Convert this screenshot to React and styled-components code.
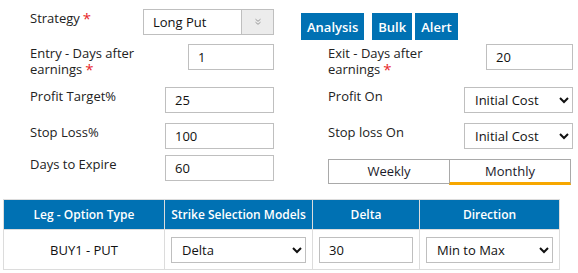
import styled, { createGlobalStyle } from 'styled-components';

const GlobalStyle = createGlobalStyle`
  body {
    margin: 0;
    font-family: "Open Sans", "Liberation Sans", sans-serif;
    font-size: 13px;
    color: #222;
    background: #fff;
  }
`;

function App() {
  return (
    <Page>
      <GlobalStyle />
      <Form>
        <Field>
          <Label>Strategy<Required>*</Required></Label>
          <StrategyBox>
            <StrategySelect defaultValue="Long Put">
              <option>Long Put</option>
              <option>Long Call</option>
            </StrategySelect>
            <ArrowBox>
              <svg width="8" height="8" viewBox="0 0 8 8" fill="none" stroke="#999" strokeWidth="1">
                <polyline points="1.5,1.2 4,3.3 6.5,1.2" />
                <polyline points="1.5,4.2 4,6.3 6.5,4.2" />
              </svg>
            </ArrowBox>
          </StrategyBox>
        </Field>
        <ButtonBar>
          <ActionButton $spaced>Analysis</ActionButton>
          <ActionButton>Bulk</ActionButton>
          <ActionButton>Alert</ActionButton>
        </ButtonBar>

        <Field>
          <Label>Entry - Days after earnings<Required>*</Required></Label>
          <TextInput $width={86} defaultValue="1" />
        </Field>
        <Field>
          <Label>Exit - Days after earnings<Required>*</Required></Label>
          <TextInput $width={87} defaultValue="20" />
        </Field>

        <Field>
          <Label>Profit Target%</Label>
          <TextInput $width={109} defaultValue="25" />
        </Field>
        <Field>
          <Label>Profit On</Label>
          <Select $width={109} defaultValue="Initial Cost">
            <option>Initial Cost</option>
            <option>Current Value</option>
          </Select>
        </Field>

        <Field>
          <Label>Stop Loss%</Label>
          <TextInput $width={109} defaultValue="100" />
        </Field>
        <Field>
          <Label>Stop loss On</Label>
          <Select $width={109} defaultValue="Initial Cost">
            <option>Initial Cost</option>
            <option>Current Value</option>
          </Select>
        </Field>

        <Field>
          <Label>Days to Expire</Label>
          <TextInput $width={109} defaultValue="60" />
        </Field>
        <Toggle>
          <ToggleButton>Weekly</ToggleButton>
          <ToggleButton $active>Monthly</ToggleButton>
        </Toggle>
      </Form>

      <LegTable>
        <colgroup>
          <col style={{ width: 161 }} />
          <col style={{ width: 148 }} />
          <col style={{ width: 107 }} />
          <col style={{ width: 140 }} />
        </colgroup>
        <thead>
          <tr>
            <Th>Leg - Option Type</Th>
            <Th>Strike Selection Models</Th>
            <Th>Delta</Th>
            <Th>Direction</Th>
          </tr>
        </thead>
        <tbody>
          <tr>
            <Td $center>BUY1 - PUT</Td>
            <Td>
              <Select $width="100%" defaultValue="Delta">
                <option>Delta</option>
                <option>Premium</option>
              </Select>
            </Td>
            <Td>
              <TextInput $width="100%" defaultValue="30" />
            </Td>
            <Td>
              <Select $width="100%" defaultValue="Min to Max">
                <option>Min to Max</option>
                <option>Max to Min</option>
              </Select>
            </Td>
          </tr>
        </tbody>
      </LegTable>
    </Page>
  );
}

const Page = styled.div`
  width: 578px;
  padding: 9px 0 0 3px;
  box-sizing: border-box;
`;

const Form = styled.div`
  display: grid;
  grid-template-columns: 271px 272px;
  grid-template-rows: 35px 43px 36px 32px 44px;
  column-gap: 27px;
  align-items: start;
`;

const Field = styled.div`
  display: flex;
  justify-content: space-between;
  align-items: flex-start;
  padding-left: 27px;
`;

const Label = styled.label`
  max-width: 122px;
  line-height: 16px;
  padding-top: 1px;
  color: #222;
`;

const Required = styled.span`
  display: inline-block;
  color: #e8262b;
  font-size: 15px;
  line-height: 10px;
  margin-left: 3px;
  vertical-align: top;
  padding-top: 3px;
`;

const inputBase = `
  box-sizing: border-box;
  height: 26px;
  border: 1px solid #bfbfbf;
  border-radius: 0;
  background: #fff;
  font-family: "Open Sans", "Liberation Sans", sans-serif;
  font-size: 13px;
  color: #111;
  outline: none;
`;

const TextInput = styled.input`
  ${inputBase}
  width: ${(p) => (typeof p.$width === 'number' ? `${p.$width}px` : p.$width)};
  padding: 0 9px;
`;

const Select = styled.select`
  ${inputBase}
  width: ${(p) => (typeof p.$width === 'number' ? `${p.$width}px` : p.$width)};
  padding: 0 4px 0 6px;
`;

const StrategyBox = styled.div`
  display: flex;
  width: 131px;
  height: 26px;
  box-sizing: border-box;
  border: 1px solid #bfbfbf;
`;

const StrategySelect = styled.select`
  flex: 1;
  min-width: 0;
  appearance: none;
  border: none;
  background: #fff;
  padding: 0 9px;
  font-family: "Open Sans", "Liberation Sans", sans-serif;
  font-size: 13px;
  color: #111;
  outline: none;
`;

const ArrowBox = styled.span`
  width: 31px;
  display: flex;
  align-items: center;
  justify-content: center;
  background: #ececec;
  border-left: 1px solid #bfbfbf;
`;

const ButtonBar = styled.div`
  display: flex;
  margin-top: 4px;
`;

const ActionButton = styled.button`
  height: 27px;
  padding: 0 6px;
  margin-right: ${(p) => (p.$spaced ? '8px' : '3px')};
  border: none;
  background: #0071b3;
  color: #fff;
  font-family: "Open Sans", "Liberation Sans", sans-serif;
  font-size: 13px;
  font-weight: 600;
`;

const Toggle = styled.div`
  display: flex;
  margin: 4px 0 0 27px;
`;

const ToggleButton = styled.div`
  box-sizing: border-box;
  width: 122px;
  height: ${(p) => (p.$active ? '26px' : '25px')};
  line-height: 22px;
  text-align: center;
  border: 1px solid #a9a9a9;
  border-bottom: ${(p) => (p.$active ? '3px solid #f7a700' : '1px solid #a9a9a9')};
  margin-left: ${(p) => (p.$active ? '-1px' : '0')};
  color: #1a1a2a;
`;

const LegTable = styled.table`
  width: 556px;
  border-collapse: collapse;
  table-layout: fixed;
  border: 1px solid #dcdcdc;
`;

const Th = styled.th`
  height: 29px;
  padding: 0;
  background: #0071b3;
  color: #fff;
  font-weight: 600;
  font-size: 12px;
  border: 1px solid #dcdcdc;
  border-top: none;
`;

const Td = styled.td`
  height: 40px;
  box-sizing: border-box;
  padding: 0 6px;
  border: 1px solid #dcdcdc;
  text-align: ${(p) => (p.$center ? 'center' : 'left')};
  color: #111;
`;

export default App;
